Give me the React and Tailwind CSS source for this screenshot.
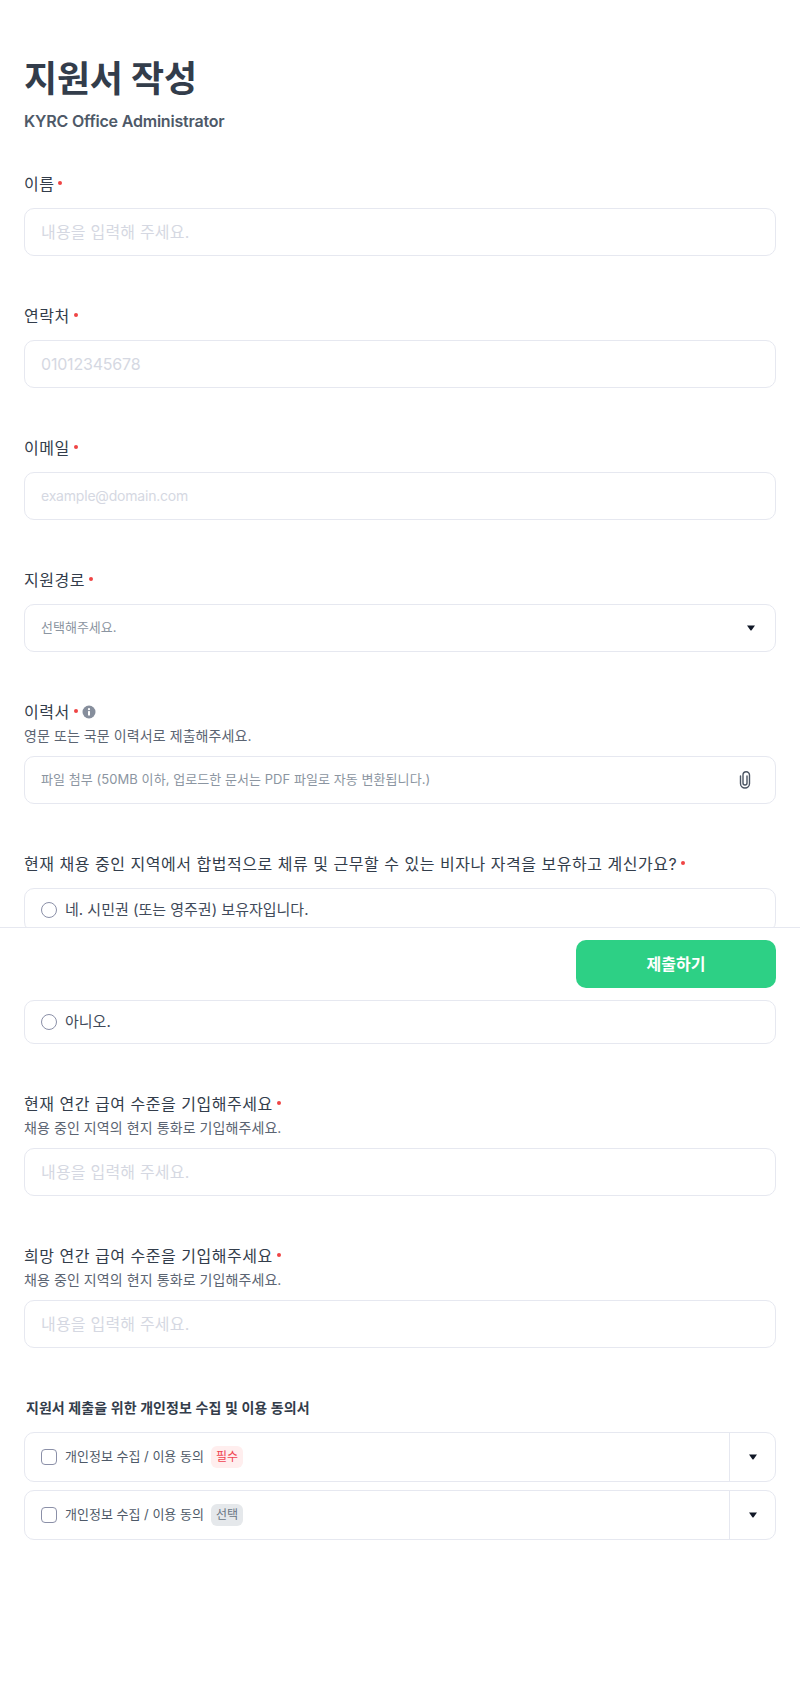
import React from "react";

function Req() {
    return <span className="mb-[3px] ml-[4px] inline-block h-[4px] w-[4px] rounded-full bg-[#ef4444]" />;
}

function Caret() {
    return (
        <svg width="10" height="6" viewBox="0 0 10 6" className="shrink-0">
            <path d="M1 0.5h8L5.6 5.2a.8.8 0 0 1-1.2 0z" fill="#111827" />
        </svg>
    );
}

function Info() {
    return (
        <svg width="14" height="14" viewBox="0 0 14 14" className="ml-[4px]">
            <circle cx="7" cy="7" r="6.5" fill="#868e9c" />
            <rect x="6" y="6" width="2" height="4.6" rx="0.5" fill="#fff" />
            <circle cx="7" cy="4.2" r="1.1" fill="#fff" />
        </svg>
    );
}

function Clip() {
    return (
        <svg width="12" height="18" viewBox="0 0 12 18" fill="none" stroke="#4b5563" strokeWidth="1.4" strokeLinecap="round">
            <path d="M8 5v7a2 2 0 0 1-4 0V4a3.25 3.25 0 0 1 6.5 0v8.5a4.5 4.5 0 0 1-9 0V5" />
        </svg>
    );
}

function Label({ children, info }) {
    return (
        <div className="flex h-[24px] items-center text-base font-normal tracking-[0.52px] text-[#333d4b]">
            {children}
            <Req />
            {info && <Info />}
        </div>
    );
}

function Help({ children }) {
    return <p className="h-[20px] text-sm leading-[23px] tracking-[0.08px] text-[#5b6472]">{children}</p>;
}

function TextField({ label, help, placeholder, inputClass = "text-base tracking-[0.2px]" }) {
    return (
        <div className="mb-[48px]">
            <Label>{label}</Label>
            {help && <Help>{help}</Help>}
            <input
                placeholder={placeholder}
                className={`mt-3 block h-[48px] w-full rounded-[10px] border border-[#e6e8f0] px-4 pb-px outline-none placeholder:text-[#d5d8e2] ${inputClass}`}
            />
        </div>
    );
}

function RadioRow({ label }) {
    return (
        <div className="flex h-[44px] items-center gap-2 rounded-[10px] border border-[#e6e8f0] px-4">
            <span className="h-4 w-4 rounded-full border border-[#8b90a8]" />
            <span className="text-[15px] text-[#3f4a5a]">{label}</span>
        </div>
    );
}

function AgreeRow({ badge, badgeClass }) {
    return (
        <div className="flex h-[50px] items-stretch rounded-[10px] border border-[#e6e8f0]">
            <div className="flex flex-1 items-center px-4">
                <span className="h-4 w-4 rounded border border-[#8b90a8]" />
                <span className="ml-2 text-[13px] text-[#4e5968]">개인정보 수집 / 이용 동의</span>
                <span className={`ml-[7px] rounded-md px-[5px] text-xs leading-[22px] ${badgeClass}`}>{badge}</span>
            </div>
            <div className="flex w-[46px] items-center justify-center border-l border-[#e6e8f0]">
                <Caret />
            </div>
        </div>
    );
}

export default function App() {
    return (
        <div className="relative min-h-[1695px] bg-white px-6 pt-[53px] font-['Inter','Noto_Sans_CJK_KR',sans-serif]">
            <h1 className="text-[36px] leading-[52px] font-bold tracking-[-0.2px] text-[#333d4b]">지원서 작성</h1>
            <p className="mt-[4px] mb-[39px] text-base leading-6 font-semibold tracking-[-0.2px] text-[#4e5968]">KYRC Office Administrator</p>

            <TextField label="이름" placeholder="내용을 입력해 주세요." />
            <TextField label="연락처" placeholder="01012345678" inputClass="text-base tracking-[-0.2px]" />
            <TextField label="이메일" placeholder="example@domain.com" inputClass="text-sm tracking-[-0.2px]" />

            <div className="mb-[48px]">
                <Label>지원경로</Label>
                <div className="mt-3 flex h-[48px] items-center justify-between rounded-[10px] border border-[#e6e8f0] pr-[19px] pl-4 text-[13px] text-[#8b95a1]">
                    선택해주세요.
                    <Caret />
                </div>
            </div>

            <div className="mb-[48px]">
                <Label info>이력서</Label>
                <Help>영문 또는 국문 이력서로 제출해주세요.</Help>
                <div className="mt-3 flex h-[48px] items-center justify-between rounded-[10px] border border-[#e6e8f0] pr-[24px] pl-4 text-[13px] tracking-[0.06px] text-[#8b95a1]">
                    파일 첨부 (50MB 이하, 업로드한 문서는 PDF 파일로 자동 변환됩니다.)
                    <Clip />
                </div>
            </div>

            <div className="mb-[48px]">
                <Label>현재 채용 중인 지역에서 합법적으로 체류 및 근무할 수 있는 비자나 자격을 보유하고 계신가요?</Label>
                <div className="mt-3 flex flex-col gap-3">
                    <RadioRow label="네. 시민권 (또는 영주권) 보유자입니다." />
                    <RadioRow label="네. 취업 비자 보유자입니다." />
                    <RadioRow label="아니오." />
                </div>
            </div>

            <TextField label="현재 연간 급여 수준을 기입해주세요" help="채용 중인 지역의 현지 통화로 기입해주세요." placeholder="내용을 입력해 주세요." />
            <TextField label="희망 연간 급여 수준을 기입해주세요" help="채용 중인 지역의 현지 통화로 기입해주세요." placeholder="내용을 입력해 주세요." />

            <h2 className="mt-[50px] mb-[14px] pl-[2px] text-sm leading-5 font-semibold tracking-[0.05px] text-[#333d4b]">지원서 제출을 위한 개인정보 수집 및 이용 동의서</h2>
            <div className="flex flex-col gap-2">
                <AgreeRow badge="필수" badgeClass="bg-[#ffeeee] text-[#f04452]" />
                <AgreeRow badge="선택" badgeClass="bg-[#e5e8eb] text-[#6b7684]" />
            </div>

            <div className="absolute top-[927px] right-0 left-0 flex h-[73px] items-start justify-end border-t border-[#e6e8f0] bg-white px-6 pt-3">
                <button className="h-[48px] w-[200px] rounded-[10px] bg-[#2dd085] text-base font-semibold text-white">제출하기</button>
            </div>
        </div>
    );
}
